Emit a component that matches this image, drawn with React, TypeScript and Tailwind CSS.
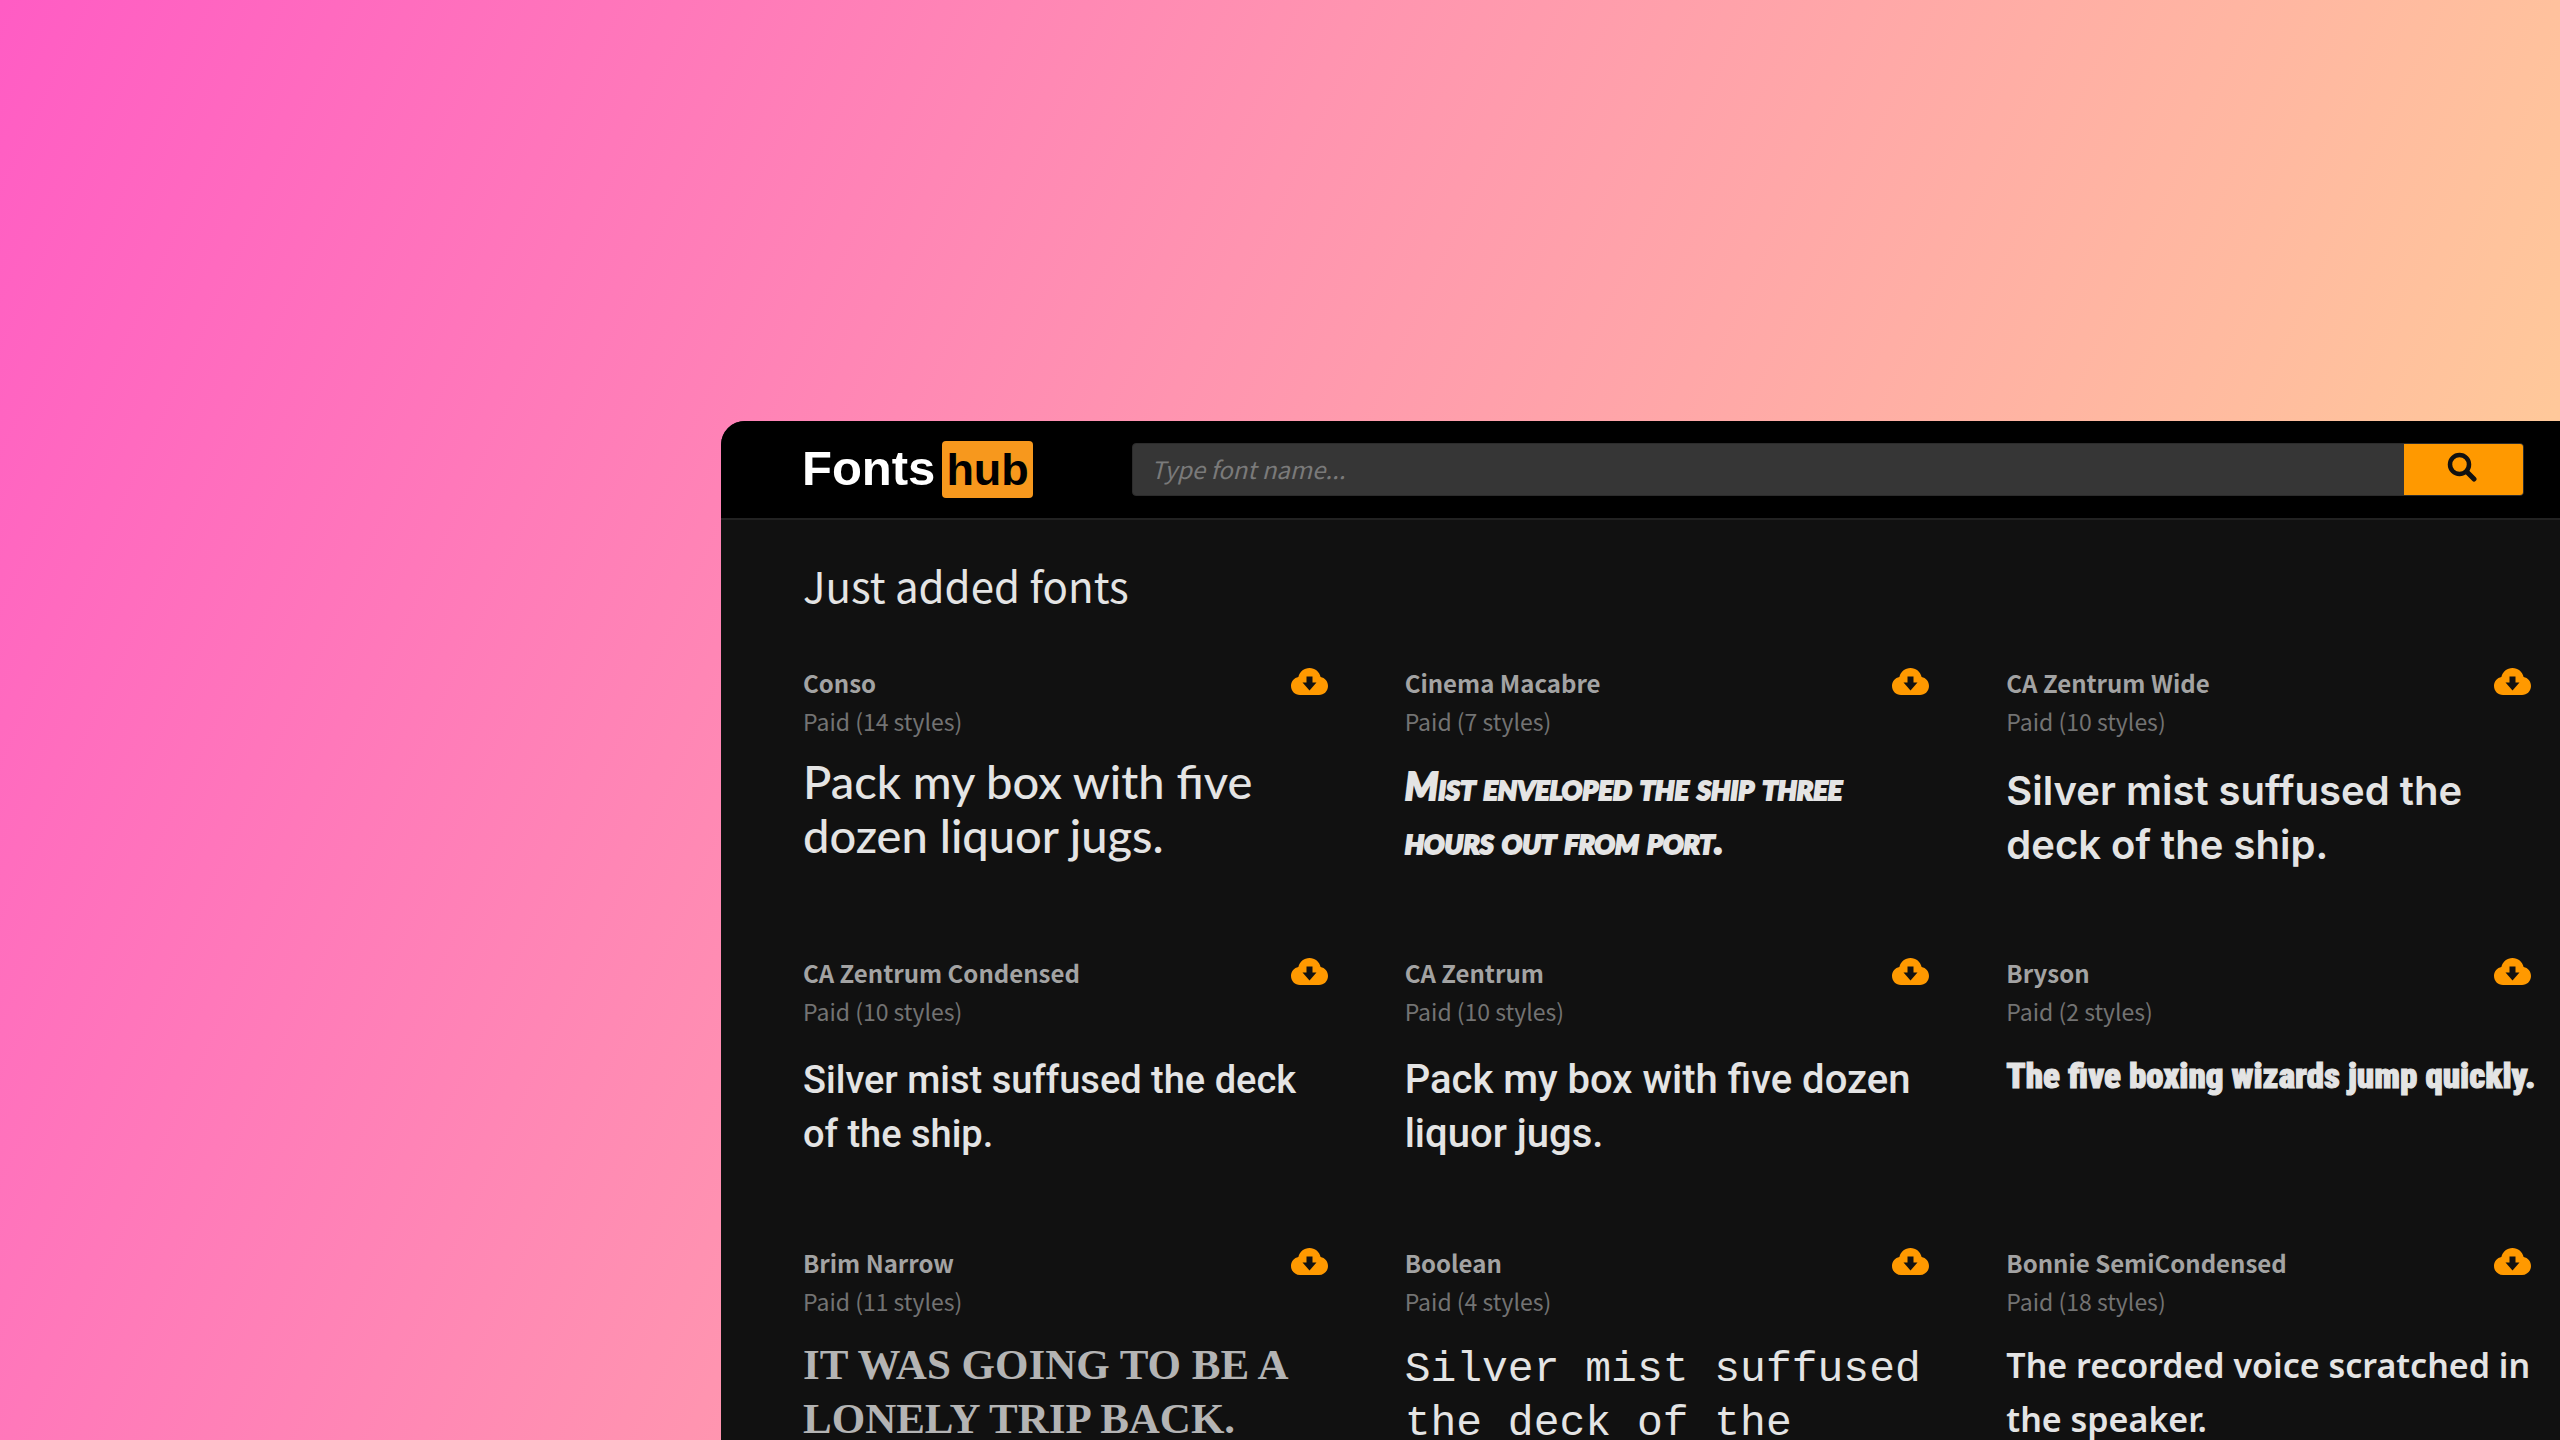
import React from "react";

type FontCard = {
  name: string;
  styles: number;
  sample: string;
  face: string;
};

const fonts: FontCard[] = [
  {
    name: "Conso",
    styles: 14,
    sample: "Pack my box with five dozen liquor jugs.",
    face: "pt-[4px] pr-12 font-['Lato',sans-serif] text-[47px] font-medium text-[#e4e4e4]",
  },
  {
    name: "Cinema Macabre",
    styles: 7,
    sample: "Mist enveloped the ship three hours out from port.",
    face: "pt-[8px] font-['Lato',sans-serif] text-[38px] font-black italic [font-variant-caps:small-caps] [-webkit-text-stroke:2px_#e4e4e4] text-[#e4e4e4]",
  },
  {
    name: "CA Zentrum Wide",
    styles: 10,
    sample: "Silver mist suffused the deck of the ship.",
    face: "pt-[14px] font-['Inter',sans-serif] text-[40px] font-semibold text-[#e4e4e4]",
  },
  {
    name: "CA Zentrum Condensed",
    styles: 10,
    sample: "Silver mist suffused the deck of the ship.",
    face: "pt-[13px] font-['Roboto',sans-serif] text-[38px] font-medium text-[#e4e4e4]",
  },
  {
    name: "CA Zentrum",
    styles: 10,
    sample: "Pack my box with five dozen liquor jugs.",
    face: "pt-[13px] font-['Roboto',sans-serif] text-[40px] font-medium text-[#e4e4e4]",
  },
  {
    name: "Bryson",
    styles: 2,
    sample: "The five boxing wizards jump quickly.",
    face: "pt-[10px] font-['Liberation_Sans_Narrow','Roboto_Condensed','Roboto',sans-serif] text-[35px] font-black whitespace-nowrap [-webkit-text-stroke:1px_#e4e4e4] text-[#e4e4e4]",
  },
  {
    name: "Brim Narrow",
    styles: 11,
    sample: "It was going to be a lonely trip back.",
    face: "pt-[8px] font-['Liberation_Serif',serif] text-[43px] font-bold uppercase text-[#b4b4b4]",
  },
  {
    name: "Boolean",
    styles: 4,
    sample: "Silver mist suffused the deck of the ship.",
    face: "pt-[13px] font-['Liberation_Mono',monospace] text-[43px] text-[#e4e4e4]",
  },
  {
    name: "Bonnie SemiCondensed",
    styles: 18,
    sample: "The recorded voice scratched in the speaker.",
    face: "pt-[8px] font-['Noto_Sans',sans-serif] text-[34px] font-semibold text-[#e4e4e4]",
  },
];

function CloudDownload() {
  return (
    <svg viewBox="0 0 37 27" className="h-[27px] w-[37px]" aria-hidden="true">
      <path
        fill="#ff9900"
        fillRule="evenodd"
        d="M9 27C4 27 0 23 0 18C0 13.4 3.2 9.9 7.4 9.1C8.4 3.8 13 0 18.5 0C24 0 28.6 3.8 29.6 9.1C33.8 9.9 37 13.4 37 18C37 23 33 27 28 27ZM15.5 8.5V14.5H11.5L18.5 22.5L25.5 14.5H21.5V8.5Z"
      />
    </svg>
  );
}

function SearchIcon() {
  return (
    <svg viewBox="0 0 30 30" className="h-[30px] w-[30px]" fill="none" stroke="#111" aria-hidden="true">
      <circle cx="12.5" cy="12.5" r="9.5" strokeWidth="4.5" />
      <path d="M19.5 19.5L27 27" strokeWidth="5" strokeLinecap="round" />
    </svg>
  );
}

function Card({ font }: { font: FontCard }) {
  return (
    <article className="h-[290px]">
      <div className="flex items-start justify-between">
        <div>
          <h3 className="text-[24px] leading-[38px] font-bold text-[#a3a3a3]">
            <a href="#">{font.name}</a>
          </h3>
          <p className="text-[23px] leading-[38px] text-[#737373]">Paid ({font.styles} styles)</p>
        </div>
        <button type="button" aria-label={`Download ${font.name}`} className="mr-[2px] pt-[4px]">
          <CloudDownload />
        </button>
      </div>
      <p className={`mt-[10px] leading-[54px] ${font.face}`}>{font.sample}</p>
    </article>
  );
}

export default function App() {
  return (
    <div className="h-screen overflow-hidden bg-[linear-gradient(115deg,#ff5cc4_0%,#ff94b0_42%,#ffc89a_85%,#ffca9a_100%)] pt-[421px] pl-[721px] font-['Noto_Sans_CJK_SC',sans-serif]">
      <div className="overflow-hidden rounded-tl-[24px] bg-[#111]">
        <header className="flex h-[99px] items-center border-b-2 border-[#222] bg-black pr-[36px] pl-[81px]">
          <a href="#" aria-label="Fonts hub" className="flex w-[330px] items-center gap-[7px] font-['Liberation_Sans',sans-serif] font-bold">
            <span className="pb-[2px] text-[49px] leading-[55px] text-white">Fonts</span>
            <span className="rounded-[4px] bg-[#f7981d] px-[4px] text-[45px] leading-[57px] text-black">hub</span>
          </a>
          <form className="flex h-[53px] flex-1 overflow-hidden rounded-[4px] border border-[#2c2c2c] bg-[#363636]" onSubmit={(e) => e.preventDefault()}>
            <input
              type="text"
              aria-label="Font name"
              placeholder="Type font name..."
              className="min-w-0 flex-1 px-[18px] pb-[2px] text-[24px] text-white italic outline-none placeholder:text-[#7a7a7a]"
            />
            <button type="submit" aria-label="Search" className="flex w-[119px] items-center justify-center bg-[#ff9900] pr-[4px] pb-[6px]">
              <SearchIcon />
            </button>
          </form>
        </header>
        <main className="pt-[33px] pr-[27px] pl-[82px]">
          <h2 className="text-[42px] leading-[64px] text-[#e4e4e4]">Just added fonts</h2>
          <div className="mt-[47px] grid grid-cols-3 gap-x-[75px]">
            {fonts.map((font) => (
              <Card key={font.name} font={font} />
            ))}
          </div>
        </main>
      </div>
    </div>
  );
}
